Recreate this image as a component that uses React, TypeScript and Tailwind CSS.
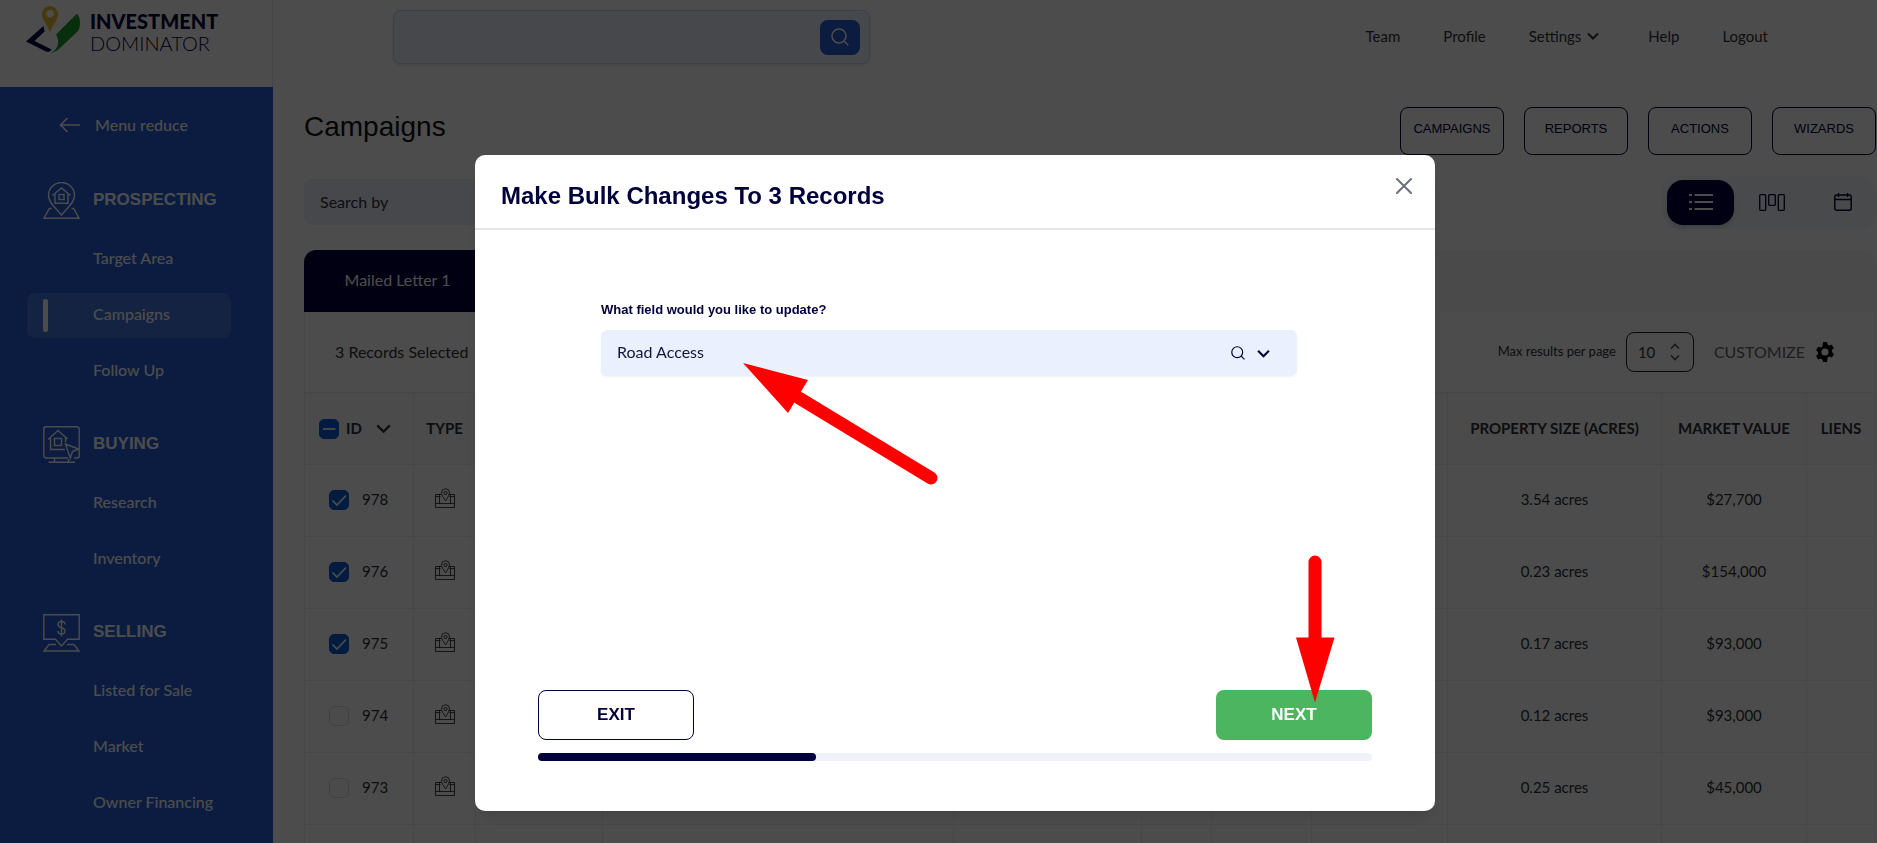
import { useState } from "react";
import type { ReactNode } from "react";
import clsx from "clsx";

type MenuSection = { title: string; icon: ReactNode; items: string[] };

const stroke = {
  fill: "none",
  stroke: "currentColor",
  strokeWidth: 1.4,
} as const;

function ProspectingIcon() {
  return (
    <svg width="37" height="37" viewBox="0 0 37 37" {...stroke}>
      <path d="M18.5 33C13 26 5.5 21 5.5 13.5a13 13 0 0 1 26 0C31.5 21 24 26 18.5 33Z" />
      <path d="M9.5 13.5 18.5 6l9 7.5M12 12v9.300h13V12" />
      <rect x="16" y="12.5" width="5" height="5" />
      <path d="M8.500 26.500H6.300L1 36.200h35l-5.300-9.700h-2.200" />
    </svg>
  );
}

function BuyingIcon() {
  return (
    <svg width="37" height="37" viewBox="0 0 37 37" {...stroke}>
      <path d="M25 32H3a2.200 2.200 0 0 1-2.200-2.200V3A2.200 2.200 0 0 1 3 .8h31A2.200 2.200 0 0 1 36.200 3v27a2 2 0 0 1-2 2H31" />
      <path d="m5 13.500 10-9 9.500 8.500M7.500 12v11.500H22M22.500 12v4" />
      <rect x="11.5" y="12.5" width="7" height="7" />
      <path d="m22.500 18 13 5-6 2.500-2.200 6.500Z" />
      <path d="M11.500 32v4M25.500 33v3M5.500 36.300H32" />
    </svg>
  );
}

function SellingIcon() {
  return (
    <svg width="37" height="38" viewBox="0 0 37 38" {...stroke}>
      <path d="M12.500 25.300H.8V.8h35.400v24.500H24.500L18.500 32Z" />
      <path d="M13 30.500H6L1 37h35l-5-6.500h-7" />
      <path d="M22 10.500c0-2-1.500-3-3.500-3s-3.500 1-3.500 3 1.500 2.700 3.500 3.200 3.500 1.200 3.500 3.300-1.500 3-3.500 3-3.500-1-3.500-3M18.500 5.500v17" />
    </svg>
  );
}

function LandIcon() {
  return (
    <svg width="20" height="20" viewBox="0 0 20 20" fill="none" stroke="currentColor" strokeWidth="0.9" className="mx-auto">
      <path d="M6.500 6.500H.5v13h19v-13h-6M.5 15.500h19M4.500 6.500v9M15.500 6.500v9M.5 8.500h5M14.500 8.500h5" />
      <path d="M10.500 13C8.500 9.500 6.500 7.500 6.500 4.800a4 4 0 0 1 8 0c0 2.700-2 4.700-4 8.200Z" />
      <circle cx="10.5" cy="5" r="1.6" />
    </svg>
  );
}

function Chevron({ size = 12, width = 2 }: { size?: number; width?: number }) {
  return (
    <svg width={size} height={size} viewBox="0 0 12 12" fill="none" stroke="currentColor" strokeWidth={width}>
      <path d="m1 3.500 5 5 5-5" />
    </svg>
  );
}

function SearchIcon({ size }: { size: number }) {
  return (
    <svg width={size} height={size} viewBox="0 0 18 18" fill="none" stroke="currentColor" strokeWidth="1.5">
      <circle cx="8" cy="8" r="7" />
      <path d="m13 13 4.300 4.300" />
    </svg>
  );
}

function Logo() {
  return (
    <a href="#" className="flex h-[87px] items-start gap-2.5 border-r border-[#dfe3f5] bg-white pt-1.5 pl-[26px] text-[#00003c]">
      <svg width="54" height="48" viewBox="0 0 54 48" className="shrink-0">
        <path d="m17.500 20-17.500 15.500L20 45.500c2.500.9 4.200 0 5.500-2L8.500 35l10-9.500Z" fill="#00003c" />
        <path d="M30 28.500 50.500 8c4 1 5 13 1 17.500L34 42c-3 2.800-6 4.500-9 5 6.500-3.500 9.500-10 5-18.500Z" fill="#1d9e2b" />
        <path
          d="M24 0a8 8 0 0 1 8 8C32 14.500 26 19.500 24 26.500c-2-7-8-12-8-18.500a8 8 0 0 1 8-8Zm0 4a3.800 3.800 0 1 0 0 7.600A3.800 3.800 0 0 0 24 4Z"
          fill="#e9be35"
        />
      </svg>
      <span className="flex flex-col pt-1 text-xl leading-[22px]">
        <b className="font-black">INVESTMENT</b>
        <span className="font-light">DOMINATOR</span>
      </span>
    </a>
  );
}

const sections: MenuSection[] = [
  { title: "PROSPECTING", icon: <ProspectingIcon />, items: ["Target Area", "Campaigns", "Follow Up"] },
  { title: "BUYING", icon: <BuyingIcon />, items: ["Research", "Inventory"] },
  { title: "SELLING", icon: <SellingIcon />, items: ["Listed for Sale", "Market", "Owner Financing"] },
];

function Sidebar() {
  return (
    <aside className="flex w-[273px] shrink-0 flex-col">
      <Logo />
      <nav className="flex-1 bg-[#255fd8] text-white">
        <button className="mt-[25px] ml-[59px] flex h-[26px] items-center gap-[15px] font-medium">
          <svg width="21" height="16" viewBox="0 0 21 16" fill="none" stroke="currentColor" strokeWidth="1.7">
            <path d="M21 8H1.500M8.500 1l-7 7 7 7" />
          </svg>
          Menu reduce
        </button>
        <div className="mt-11 flex flex-col gap-8">
          {sections.map((s) => (
            <section key={s.title}>
              <h2 className="flex h-[37px] items-center gap-[13px] pl-[43px] font-['Liberation_Sans',sans-serif] text-[17px] font-bold">
                {s.icon}
                <span className="pb-0.5">{s.title}</span>
              </h2>
              <ul className="mt-[18px] flex flex-col gap-[11px] pr-[42px] pl-[27px]">
                {s.items.map((item) => (
                  <li key={item}>
                    <a
                      href="#"
                      className={clsx(
                        "flex h-[45px] items-center rounded-lg font-medium",
                        item === "Campaigns" ? "bg-white/15 pl-4" : "pl-[66px]",
                      )}
                    >
                      {item === "Campaigns" ? <span className="mr-[45px] h-[33px] w-[5px] rounded-sm bg-white" /> : null}
                      <span className="pb-[3px]">{item}</span>
                    </a>
                  </li>
                ))}
              </ul>
            </section>
          ))}
        </div>
      </nav>
    </aside>
  );
}

function TopBar() {
  return (
    <header className="flex h-[87px] items-start justify-between pt-2.5 pr-[109px] pl-[120px]">
      <form className="flex h-[54px] w-[477px] items-center rounded-lg border border-[#cdd6f5] bg-[#ebf0fe] pr-[9px] shadow-sm">
        <input aria-label="Search" className="h-full min-w-0 flex-1 bg-transparent px-4 outline-none" />
        <button type="button" aria-label="Search" className="flex h-[35px] w-10 items-center justify-center rounded-lg bg-[#255fd8] text-white">
          <SearchIcon size={18} />
        </button>
      </form>
      <nav className="flex h-[54px] items-center gap-[43px] pb-0.5 text-[15px] text-[#333]">
        <a href="#">Team</a>
        <a href="#">Profile</a>
        <a href="#" className="mr-1.5 flex items-center gap-1.5">
          Settings
          <Chevron />
        </a>
        <a href="#">Help</a>
        <a href="#">Logout</a>
      </nav>
    </header>
  );
}

function ViewToggle() {
  return (
    <div className="flex h-[54px] w-[214px] items-center rounded-[18px] bg-[#f4f7ff] pl-[5px] text-[#00003c]">
      <button aria-label="List view" className="flex h-[45px] w-[67px] items-center justify-center rounded-2xl bg-[#00003c] text-white shadow-md">
        <svg width="24" height="18" viewBox="0 0 24 18" fill="none" stroke="currentColor" strokeWidth="2">
          <path d="M5.500 2H24M5.500 9H24M5.500 16H24M0 2h3M0 9h3M0 16h3" />
        </svg>
      </button>
      <button aria-label="Board view" className="flex w-[75px] items-center justify-center">
        <svg width="26" height="17" viewBox="0 0 26 17" fill="none" stroke="currentColor" strokeWidth="1.3">
          <rect x=".7" y=".7" width="6" height="15.6" rx=".8" />
          <rect x="9.7" y=".7" width="6.6" height="10.6" rx=".8" />
          <rect x="19.3" y=".7" width="6" height="15.6" rx=".8" />
        </svg>
      </button>
      <button aria-label="Calendar view" className="flex flex-1 items-center justify-center">
        <svg width="18" height="18" viewBox="0 0 18 18" fill="none" stroke="currentColor" strokeWidth="1.4">
          <rect x=".8" y="2" width="16.4" height="15.2" rx="1.8" />
          <path d="M.8 6.500h16.400M4.500 0v4M13.500 0v4" />
        </svg>
      </button>
    </div>
  );
}

const rows = [
  { id: 978, size: "3.54 acres", value: "$27,700", selected: true },
  { id: 976, size: "0.23 acres", value: "$154,000", selected: true },
  { id: 975, size: "0.17 acres", value: "$93,000", selected: true },
  { id: 974, size: "0.12 acres", value: "$93,000", selected: false },
  { id: 973, size: "0.25 acres", value: "$45,000", selected: false },
];

function Tick({ label, checked, mixed }: { label: string; checked: boolean; mixed?: boolean }) {
  return (
    <span className="relative inline-flex">
      <input
        type="checkbox"
        aria-label={label}
        defaultChecked={checked}
        className="size-5 appearance-none rounded-[5px] border border-[#dcdcdc] bg-[#fafafa] checked:border-[#0a5bd0] checked:bg-[#0a5bd0]"
      />
      {checked ? (
        <svg viewBox="0 0 20 20" fill="none" stroke="#fff" strokeWidth="1.7" className="pointer-events-none absolute inset-0">
          <path d={mixed ? "M4 10h12.500" : "m3.500 10.500 4.500 4.500 9-9.500"} />
        </svg>
      ) : null}
    </span>
  );
}

function RecordsTable() {
  const blanks = [127, 351, 188, 70, 100, 136];
  return (
    <table className="w-full table-fixed border-collapse text-center text-[15px] text-[#2b2f36] [&_td]:border [&_td]:border-[#efefef] [&_td]:pb-0.5 [&_th]:border [&_th]:border-[#efefef]">
      <colgroup>
        <col className="w-[109px]" />
        <col className="w-[62px]" />
        {blanks.map((w) => (
          <col key={w} style={{ width: w }} />
        ))}
        <col className="w-[214px]" />
        <col className="w-[145px]" />
        <col />
      </colgroup>
      <thead>
        <tr className="h-[72px] bg-[#fafafa]">
          <th>
            <span className="flex items-center pl-3.5">
              <Tick label="Select all records" checked mixed />
              <span className="mr-3.5 ml-[7px]">ID</span>
              <Chevron size={15} width={1.7} />
            </span>
          </th>
          <th>TYPE</th>
          {blanks.map((w) => (
            <th key={w} />
          ))}
          <th>PROPERTY SIZE (ACRES)</th>
          <th>MARKET VALUE</th>
          <th>LIENS</th>
        </tr>
      </thead>
      <tbody>
        {rows.map((r) => (
          <tr key={r.id} className="h-[72px]">
            <td>
              <span className="flex items-center gap-[13px] pl-6">
                <Tick label={`Select record ${r.id}`} checked={r.selected} />
                {r.id}
              </span>
            </td>
            <td>
              <span className="block pb-1">
                <LandIcon />
              </span>
            </td>
            {blanks.map((w) => (
              <td key={w} />
            ))}
            <td>{r.size}</td>
            <td>{r.value}</td>
            <td />
          </tr>
        ))}
        <tr className="h-[72px]">
          <td />
          <td />
          {blanks.map((w) => (
            <td key={w} />
          ))}
          <td />
          <td />
          <td />
        </tr>
      </tbody>
    </table>
  );
}

function CampaignsPage() {
  return (
    <main className="pr-px pl-[31px]">
      <div className="mt-5 flex items-start justify-between">
        <h1 className="font-['Liberation_Sans',sans-serif] text-[28px] leading-10 text-[#111]">Campaigns</h1>
        <div className="flex gap-5">
          {["CAMPAIGNS", "REPORTS", "ACTIONS", "WIZARDS"].map((label) => (
            <button
              key={label}
              className="h-12 w-[104px] rounded-lg border border-[#00003c] pb-1 font-['Liberation_Sans',sans-serif] text-[13px] text-[#00003c]"
            >
              {label}
            </button>
          ))}
        </div>
      </div>

      <div className="mt-5 flex h-[54px] items-center justify-between">
        <input
          aria-label="Search by"
          placeholder="Search by"
          className="h-[46px] w-[400px] rounded-lg bg-[#ebf0fe] px-4 pb-0.5 placeholder:text-[#333]"
        />
        <ViewToggle />
      </div>

      <div className="mt-[21px] flex h-[62px] overflow-hidden rounded-t-xl bg-[#f7f7f7]">
        <button className="w-[187px] bg-[#00003c] pb-0.5 text-white">Mailed Letter 1</button>
      </div>

      <div className="flex h-20 items-center border-x border-[#efefef] pr-10 pl-[30px] text-[#333]">
        <span>3 Records Selected</span>
        <label htmlFor="per-page" className="ml-auto text-[13px]">
          Max results per page
        </label>
        <span className="relative ml-2.5">
          <select id="per-page" className="h-10 w-[68px] appearance-none rounded-lg border border-[#222] pl-[11px] text-[15px]">
            <option>10</option>
          </select>
          <svg width="10" height="18" viewBox="0 0 10 18" fill="none" stroke="#555" strokeWidth="1.6" className="pointer-events-none absolute top-[11px] right-[14px]">
            <path d="m1 5.500 4-4 4 4M1 12.500l4 4 4-4" />
          </svg>
        </span>
        <button className="ml-5 flex items-center gap-2.5 text-[#666]">
          CUSTOMIZE
          <svg width="20" height="20" viewBox="0 0 20 20" fill="#000" fillRule="evenodd">
            <path d="M8 0h4l.6 2.700 1.600.9 2.700-.9 2 3.500-2 1.900v1.900l2 1.900-2 3.500-2.700-.9-1.600.9L12 20H8l-.6-2.600-1.600-.9-2.700.9-2-3.500 2-1.900v-1.900l-2-1.900 2-3.500 2.700.9 1.600-.9ZM10 6.400a3.600 3.600 0 1 0 0 7.200 3.600 3.600 0 0 0 0-7.200Z" />
          </svg>
        </button>
      </div>
      <RecordsTable />
    </main>
  );
}

function BulkChangeDialog({ onClose }: { onClose: () => void }) {
  const progress = 33.3;
  return (
    <div className="fixed inset-0 flex items-start justify-center bg-black/70 pt-[155px] pl-[33px]">
      <div
        role="dialog"
        aria-labelledby="bulk-title"
        className="relative w-[960px] rounded-[10px] bg-white font-['Liberation_Sans',sans-serif] text-[#00003c] shadow-lg"
      >
        <div className="flex h-[75px] items-start justify-between border-b-2 border-[#e3e5e8] pr-[23px] pl-[26px]">
          <h2 id="bulk-title" className="pt-[25px] text-2xl font-bold">
            Make Bulk Changes To 3 Records
          </h2>
          <button aria-label="Close" onClick={onClose} className="mt-[23px] text-[#6b727b]">
            <svg width="16" height="16" viewBox="0 0 16 16" fill="none" stroke="currentColor" strokeWidth="2" strokeLinecap="round">
              <path d="m1 1 14 14M15 1 1 15" />
            </svg>
          </button>
        </div>

        <div className="px-[63px] pt-[70px] pb-[50px]">
          <div className="ml-[63px] w-[696px]">
            <label htmlFor="field" className="block text-[13px] leading-5 font-bold">
              What field would you like to update?
            </label>
            <div className="relative mt-2.5">
              <select
                id="field"
                className="h-[46px] w-full appearance-none rounded-md bg-[#eaf0fe] pb-0.5 pl-4 font-[Lato,sans-serif] text-base text-[#14143c] shadow-xs"
              >
                <option>Road Access</option>
              </select>
              <span className="pointer-events-none absolute inset-y-0 right-[27px] flex items-center gap-3">
                <SearchIcon size={14} />
                <Chevron size={13} width={2} />
              </span>
            </div>
          </div>

          <div className="mt-[314px] flex justify-between">
            <button onClick={onClose} className="h-[50px] w-[156px] rounded-lg border border-[#00003c] text-[17px] font-bold">
              EXIT
            </button>
            <button className="h-[50px] w-[156px] rounded-lg bg-[#4cb560] text-[17px] font-bold text-white">NEXT</button>
          </div>
          <div className="mt-[13px] h-2 rounded-full bg-[#f0f2fa]">
            <div className="h-2 rounded-full bg-[#00003c]" style={{ width: `${progress}%` }} />
          </div>
        </div>

        {/* pointers to the field and to the next step */}
        <svg className="pointer-events-none absolute inset-0 size-full" fill="#f00" stroke="#f00">
          <path d="m456 323-132-80M840 407v80" strokeWidth="13" strokeLinecap="round" />
          <path d="m268 208 65 17-20 33ZM821 482.500h38.500l-19.500 65Z" stroke="none" />
        </svg>
      </div>
    </div>
  );
}

export default function App() {
  const [open, setOpen] = useState(true);

  return (
    <div className="flex h-screen overflow-hidden bg-white font-[Lato,sans-serif] text-base">
      <Sidebar />
      <div className="min-w-0 flex-1">
        <TopBar />
        <CampaignsPage />
      </div>
      {open ? <BulkChangeDialog onClose={() => setOpen(false)} /> : null}
    </div>
  );
}
